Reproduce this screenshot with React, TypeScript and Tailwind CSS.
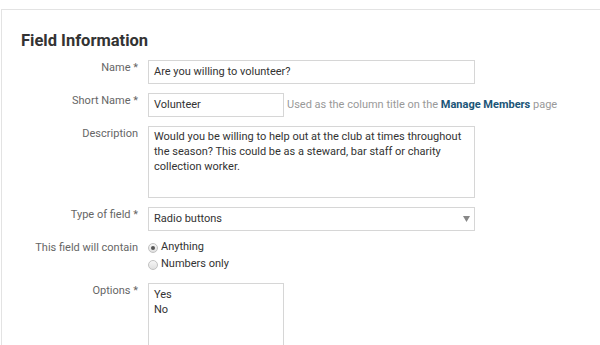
import type { ReactNode } from 'react';

type FieldRowProps = {
  label: string;
  children: ReactNode;
};

function FieldRow({ label, children }: FieldRowProps) {
  return (
    <div className="flex items-start">
      <label className="w-[146px] shrink-0 pr-[10px] pt-[1px] text-right text-[11px] leading-[14px] text-[#666]">{label}</label>
      <div className="flex-1">{children}</div>
    </div>
  );
}

function Radio({ checked, label }: { checked?: boolean; label: string }) {
  return (
    <div className="flex h-[17px] items-center gap-[3px]">
      <span className="flex h-[10px] w-[10px] items-center justify-center rounded-full border border-[#c2c2c2] bg-gradient-to-b from-[#f6f6f6] to-[#e0e0e0]">
        {checked && <span className="h-[4px] w-[4px] rounded-full bg-[#555]" />}
      </span>
      <span className="text-[11px] text-[#333]">{label}</span>
    </div>
  );
}

export default function App() {
  return (
    <div className="h-[345px] w-[600px] overflow-hidden bg-white pl-[1px] pt-[9px]" style={{ fontFamily: 'Roboto, "Liberation Sans", sans-serif' }}>
      <section className="h-full border-l border-t border-[#e3e3e3]">
        <h2 className="pl-[19px] pt-[20px] text-[16.5px] font-bold leading-[22px] text-[#333]">Field Information</h2>
        <div className="mt-[8px] flex flex-col gap-[9px]">
          <FieldRow label="Name *">
            <div className="flex h-[24px] w-[327px] items-center border border-[#d6d6d6] px-[5px] text-[11px] text-[#333]">Are you willing to volunteer?</div>
          </FieldRow>

          <FieldRow label="Short Name *">
            <div className="flex items-center">
              <div className="flex h-[24px] w-[136px] items-center border border-[#d6d6d6] px-[5px] text-[11px] text-[#333]">Volunteer</div>
              <span className="ml-[3px] text-[11px] text-[#999]">
                Used as the column title on the <a className="font-bold text-[#1b5577]">Manage Members</a> page
              </span>
            </div>
          </FieldRow>

          <FieldRow label="Description">
            <div className="h-[72px] w-[327px] border border-[#d6d6d6] px-[5px] pt-[2px] text-[11px] leading-[15px] text-[#333]">
              Would you be willing to help out at the club at times throughout
              <br />
              the season? This could be as a steward, bar staff or charity
              <br />
              collection worker.
            </div>
          </FieldRow>

          <FieldRow label="Type of field *">
            <div className="flex h-[24px] w-[327px] items-center justify-between border border-[#d6d6d6] pl-[5px] pr-[4px] text-[11px] text-[#333]">
              <span>Radio buttons</span>
              <svg width="7" height="6" viewBox="0 0 7 6">
                <path d="M0 0 H7 L3.5 6 Z" fill="#888" />
              </svg>
            </div>
          </FieldRow>

          <FieldRow label="This field will contain">
            <div className="-mt-[1px] flex flex-col">
              <Radio checked label="Anything" />
              <Radio label="Numbers only" />
            </div>
          </FieldRow>

          <div className="mt-[1px]">
            <FieldRow label="Options *">
              <div className="h-[80px] w-[136px] border border-[#d6d6d6] px-[5px] pt-[3px] text-[11px] leading-[15px] text-[#333]">
                Yes
                <br />
                No
              </div>
            </FieldRow>
          </div>
        </div>
      </section>
    </div>
  );
}
